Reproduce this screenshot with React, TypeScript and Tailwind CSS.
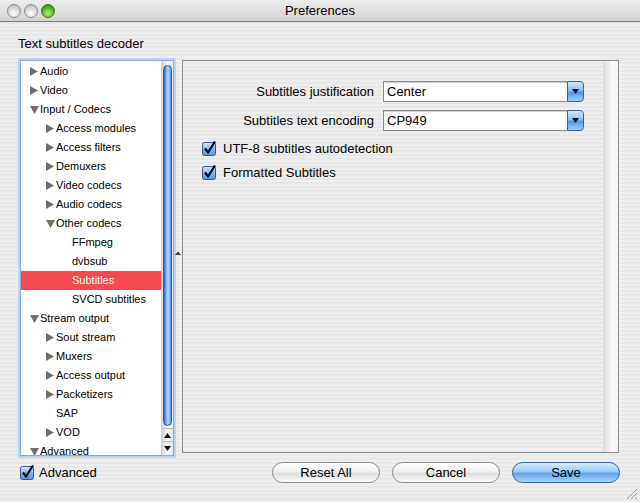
import React from "react";

type Row = { label: string; level: number; state: "c" | "e" | "n"; selected?: boolean };

const rows: Row[] = [
  { label: "Audio", level: 0, state: "c" },
  { label: "Video", level: 0, state: "c" },
  { label: "Input / Codecs", level: 0, state: "e" },
  { label: "Access modules", level: 1, state: "c" },
  { label: "Access filters", level: 1, state: "c" },
  { label: "Demuxers", level: 1, state: "c" },
  { label: "Video codecs", level: 1, state: "c" },
  { label: "Audio codecs", level: 1, state: "c" },
  { label: "Other codecs", level: 1, state: "e" },
  { label: "FFmpeg", level: 2, state: "n" },
  { label: "dvbsub", level: 2, state: "n" },
  { label: "Subtitles", level: 2, state: "n", selected: true },
  { label: "SVCD subtitles", level: 2, state: "n" },
  { label: "Stream output", level: 0, state: "e" },
  { label: "Sout stream", level: 1, state: "c" },
  { label: "Muxers", level: 1, state: "c" },
  { label: "Access output", level: 1, state: "c" },
  { label: "Packetizers", level: 1, state: "c" },
  { label: "SAP", level: 1, state: "n" },
  { label: "VOD", level: 1, state: "c" },
  { label: "Advanced", level: 0, state: "e" },
];

const pin =
  "bg-[image:repeating-linear-gradient(0deg,#eeeeee_0px,#eeeeee_2px,#e7e7e7_2px,#e7e7e7_4px)]";

function Triangle({ open }: { open: boolean }) {
  return open ? (
    <svg width="9" height="8" viewBox="0 0 9 8">
      <polygon points="0,0 9,0 4.5,8" fill="#6f6f6f" />
    </svg>
  ) : (
    <svg width="8" height="9" viewBox="0 0 8 9">
      <polygon points="0,0 8,4.5 0,9" fill="#6f6f6f" />
    </svg>
  );
}

function Check() {
  return (
    <svg width="15" height="16" viewBox="0 0 15 16">
      <defs>
        <linearGradient id="cb" x1="0" y1="0" x2="0" y2="1">
          <stop offset="0" stopColor="#d6ecff" />
          <stop offset="0.5" stopColor="#7fb9f2" />
          <stop offset="1" stopColor="#4f95e6" />
        </linearGradient>
      </defs>
      <rect x="0.5" y="1.5" width="13" height="13" rx="2" fill="url(#cb)" stroke="#35568a" />
      <path d="M3 7.5 L6 11.5 L13 0.5" fill="none" stroke="#000" strokeWidth="2.2" strokeLinejoin="round" />
    </svg>
  );
}

function Light({ color }: { color: "grey" | "green" }) {
  const cls =
    color === "green"
      ? "bg-[radial-gradient(circle_at_50%_70%,#b8f57a,#4bab1c_60%,#2c7a0c)] border-[#3f7a20]"
      : "bg-[radial-gradient(circle_at_50%_70%,#ffffff,#d2d2d2_60%,#a9a9a9)] border-[#8c8c8c]";
  return <div className={`w-[14px] h-[14px] rounded-full border ${cls}`} />;
}

function Select({ value }: { value: string }) {
  return (
    <div className="flex h-[21px] w-[201px]">
      <div className="flex-1 bg-white border border-[#8a8a8a] border-r-0 shadow-[inset_0_1px_0_#cfcfcf] pl-[3px] flex items-center text-[13px]">
        {value}
      </div>
      <div className="w-[17px] rounded-r-[4px] border border-[#3d5f95] bg-[linear-gradient(180deg,#cfe6fd,#8cc1f5_45%,#4e95e4_55%,#9ad0fb)] flex items-center justify-center">
        <svg width="7" height="5" viewBox="0 0 7 5">
          <polygon points="0,0 7,0 3.5,5" fill="#111" />
        </svg>
      </div>
    </div>
  );
}

function AquaButton({ label, primary }: { label: string; primary?: boolean }) {
  const cls = primary
    ? "border-[#33609e] bg-[linear-gradient(180deg,#d7ecfd,#9bcaf7_45%,#5ea5ee_55%,#a6d7fc)]"
    : "border-[#8a8a8a] bg-[linear-gradient(180deg,#ffffff,#f1f1f1_45%,#dedede_55%,#fbfbfb)]";
  return (
    <div
      className={`w-[108px] h-[21px] rounded-full border flex items-center justify-center text-[13px] text-black ${cls}`}
    >
      {label}
    </div>
  );
}

export default function App() {
  return (
    <div
      className={`w-[640px] h-[502px] flex flex-col overflow-hidden text-black ${pin}`}
      style={{ fontFamily: '"Liberation Sans", Arial, sans-serif' }}
    >
      {/* Title bar */}
      <div className="relative h-[22px] shrink-0 border-b border-[#7d7d7d] bg-[linear-gradient(180deg,#ececec,#d3d3d3)] flex items-center">
        <div className="flex gap-[3px] pl-[7px]">
          <Light color="grey" />
          <Light color="grey" />
          <Light color="green" />
        </div>
        <div className="absolute inset-0 flex items-center justify-center text-[13px]">Preferences</div>
      </div>

      <div className="ml-[18px] mt-[14px] h-[16px] leading-[16px] text-[13px]">Text subtitles decoder</div>

      {/* Main row */}
      <div className="flex mt-[8px] h-[396px]">
        {/* Tree */}
        <div className="ml-[20px] w-[154px] h-[396px] border border-[#86a9d6] shadow-[0_0_0_2px_#bcd4ef] flex bg-white">
          <div className="w-[140px] overflow-hidden pt-[1px] text-[11px]">
            {rows.map((r) => (
              <div
                key={r.label}
                className={`h-[19px] flex items-center ${r.selected ? "bg-[#f24a4f] text-white" : ""}`}
                style={{ paddingLeft: 9 + 16 * r.level }}
              >
                <div className="w-[10px] flex items-center">
                  {r.state !== "n" && <Triangle open={r.state === "e"} />}
                </div>
                <span>{r.label}</span>
              </div>
            ))}
          </div>
          {/* Scrollbar */}
          <div className="w-[12px] flex flex-col bg-[linear-gradient(90deg,#d9d9d9,#f7f7f7_50%,#e6e6e6)] border-l border-[#d0d0d0]">
            <div className="flex-1 pt-[4px] pb-[2px] px-[1px]">
              <div className="h-full rounded-full border border-[#2c57a0] bg-[linear-gradient(90deg,#2f66c9,#8ebef2_40%,#b5dafc_55%,#5c97e3)]" />
            </div>
            <div className="h-[13px] flex items-center justify-center border-t border-[#bdbdbd]">
              <svg width="7" height="5" viewBox="0 0 7 5">
                <polygon points="3.5,0 7,5 0,5" fill="#111" />
              </svg>
            </div>
            <div className="h-[14px] flex items-center justify-center border-t border-[#bdbdbd]">
              <svg width="7" height="5" viewBox="0 0 7 5">
                <polygon points="0,0 7,0 3.5,5" fill="#111" />
              </svg>
            </div>
          </div>
        </div>

        {/* Splitter */}
        <div className="w-[8px] flex flex-col items-center pt-[191px]">
          <svg width="6" height="5" viewBox="0 0 6 5">
            <path d="M0.5 4 L3 1 L5.5 4" fill="#555" stroke="#333" strokeWidth="1" />
          </svg>
        </div>

        {/* Right panel */}
        <div className="w-[437px] h-[393px] border border-[#8f8f8f] flex">
          <div className="flex-1 flex flex-col text-[13px]">
            <div className="flex items-center mt-[20px]">
              <div className="w-[191px] text-right">Subtitles justification</div>
              <div className="ml-[9px]">
                <Select value="Center" />
              </div>
            </div>
            <div className="flex items-center mt-[8px]">
              <div className="w-[191px] text-right">Subtitles text encoding</div>
              <div className="ml-[9px]">
                <Select value="CP949" />
              </div>
            </div>
            <div className="flex items-center ml-[19px] mt-[10px] h-[16px] gap-[6px]">
              <Check />
              <span>UTF-8 subtitles autodetection</span>
            </div>
            <div className="flex items-center ml-[19px] mt-[8px] h-[16px] gap-[6px]">
              <Check />
              <span>Formatted Subtitles</span>
            </div>
          </div>
          <div className="w-[15px] bg-[linear-gradient(90deg,#d9d9d9,#fbfbfb_60%,#f2f2f2)]" />
        </div>
      </div>

      {/* Bottom row */}
      <div className="relative flex items-center mt-[6px] h-[21px]">
        <div className="flex items-center ml-[20px] gap-[4px] text-[13px]">
          <Check />
          <span>Advanced</span>
        </div>
        <div className="flex gap-[12px] ml-auto mr-[20px]">
          <AquaButton label="Reset All" />
          <AquaButton label="Cancel" />
          <AquaButton label="Save" primary />
        </div>
      </div>

      {/* Resize grip */}
      <div className="flex justify-end mt-auto pr-[2px] pb-[2px]">
        <svg width="12" height="12" viewBox="0 0 12 12">
          <path d="M11 1 L1 11 M11 5 L5 11 M11 9 L9 11" stroke="#9a9a9a" strokeWidth="1" />
        </svg>
      </div>
    </div>
  );
}
